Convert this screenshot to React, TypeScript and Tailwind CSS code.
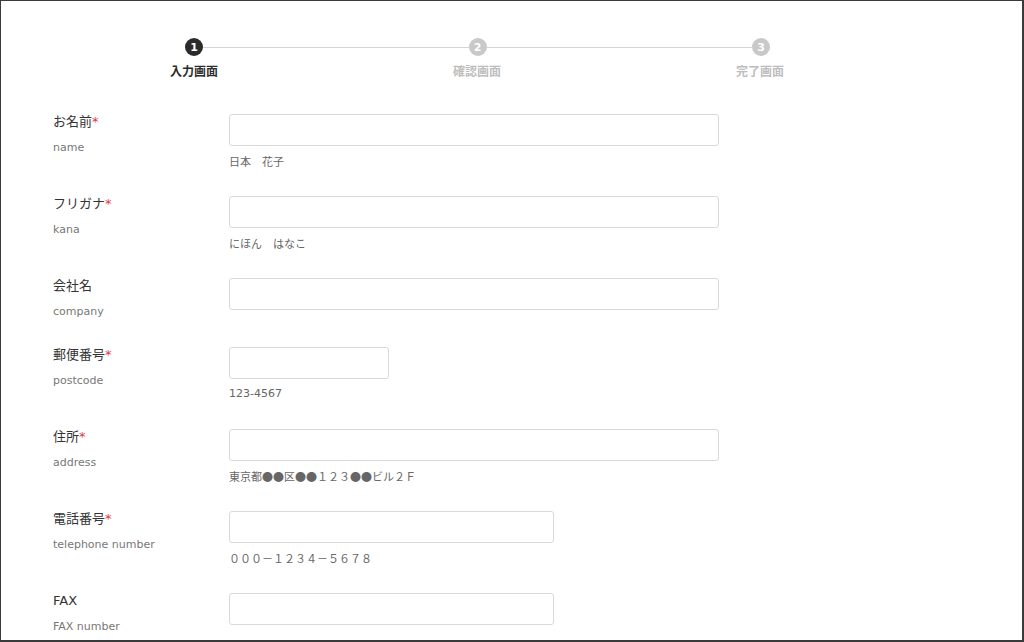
import React from "react";

type Row = {
  label: string;
  sub: string;
  required?: boolean;
  width: string;
  hint?: string;
  cjkHint?: boolean;
};

const rows: Row[] = [
  { label: "お名前", sub: "name", required: true, width: "w-[490px]", hint: "日本　花子", cjkHint: true },
  { label: "フリガナ", sub: "kana", required: true, width: "w-[490px]", hint: "にほん　はなこ", cjkHint: true },
  { label: "会社名", sub: "company", width: "w-[490px]" },
  { label: "郵便番号", sub: "postcode", required: true, width: "w-[160px]", hint: "123-4567" },
  { label: "住所", sub: "address", required: true, width: "w-[490px]", hint: "東京都●●区●●１２３●●ビル２Ｆ", cjkHint: true },
  { label: "電話番号", sub: "telephone number", required: true, width: "w-[325px]", hint: "０００－１２３４－５６７８", cjkHint: true },
  { label: "FAX", sub: "FAX number", width: "w-[325px]" },
];

const steps = [
  { n: 1, label: "入力画面", active: true },
  { n: 2, label: "確認画面", active: false },
  { n: 3, label: "完了画面", active: false },
];

const Circle: React.FC<{ n: number; active: boolean }> = ({ n, active }) => (
  <div
    className={`flex h-[18px] w-[18px] shrink-0 items-center justify-center rounded-full text-[11px] font-bold leading-none text-white ${
      active ? "bg-[#2b2b2b]" : "bg-[#c9c9c9]"
    }`}
  >
    {n}
  </div>
);

export default function App() {
  return (
    <div
      className="h-[642px] w-[1024px] overflow-hidden border-t border-l border-r-2 border-b-2 border-[#3a3a3a] bg-white text-[#333]"
      style={{ fontFamily: '"DejaVu Sans", "Noto Sans CJK JP", sans-serif' }}
    >
      {/* Stepper */}
      <div className="pt-[37px]">
        <div className="ml-[184px] flex w-[585px] items-center">
          <Circle n={1} active />
          <div className="h-px flex-1 bg-[#d4d4d4]" />
          <Circle n={2} active={false} />
          <div className="h-px flex-1 bg-[#d4d4d4]" />
          <Circle n={3} active={false} />
        </div>
        <div className="ml-[143px] mt-[8px] flex w-[666px] justify-between">
          {steps.map((s) => (
            <div
              key={s.n}
              className={`w-[100px] text-center text-[12px] font-bold leading-[16px] ${
                s.active ? "text-[#2b2b2b]" : "text-[#bdbdbd]"
              }`}
            >
              {s.label}
            </div>
          ))}
        </div>
      </div>

      {/* Form */}
      <div className="mt-[34px] pl-[52px]">
        {rows.map((r) => (
          <div key={r.label} className="mb-[27px] flex">
            <div className="w-[176px] shrink-0">
              <div className="text-[13px] leading-[16px] text-[#333]">
                {r.label}
                {r.required && <span className="text-[#e0383e]">*</span>}
              </div>
              <div className="mt-[10px] text-[11px] leading-[16px] text-[#777]">{r.sub}</div>
            </div>
            <div>
              <input
                type="text"
                className={`block h-[32px] ${r.width} rounded-[3px] border border-[#d9d9d9] bg-white px-2 text-[13px] outline-none`}
              />
              {r.hint && (
                <div
                  className={`mt-[7px] text-[11px] leading-[16px] text-[#666] ${
                    r.cjkHint ? "font-['Noto_Sans_CJK_JP',sans-serif]" : ""
                  }`}
                >
                  {r.hint}
                </div>
              )}
            </div>
          </div>
        ))}
      </div>
    </div>
  );
}
